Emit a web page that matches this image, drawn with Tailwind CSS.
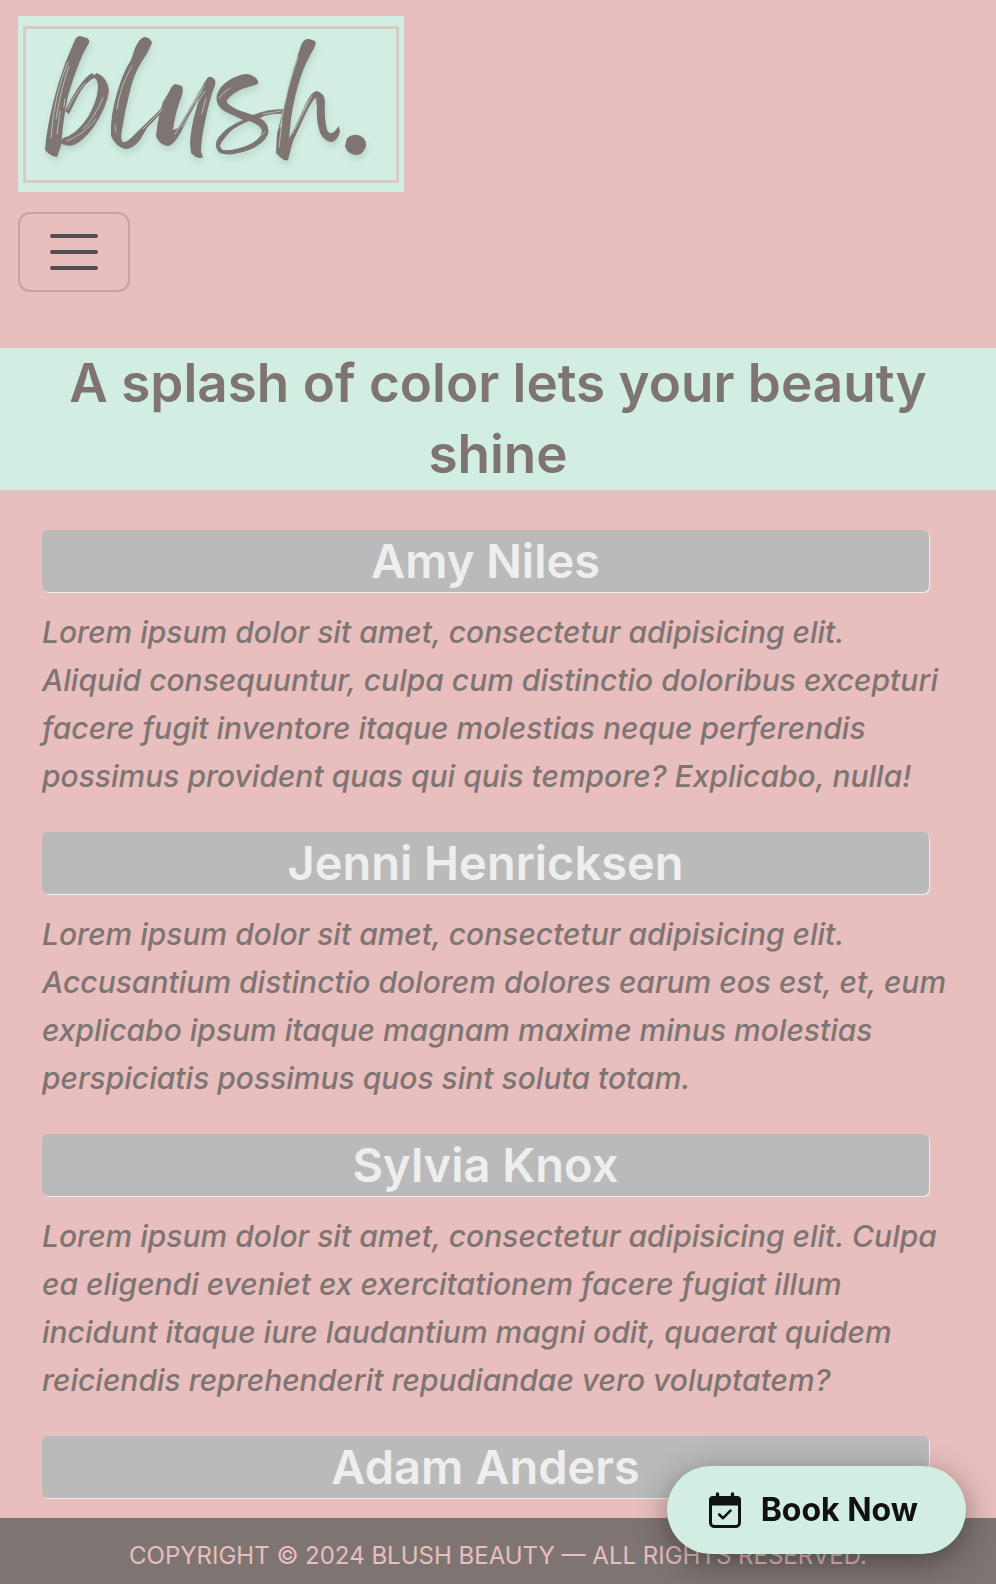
<!DOCTYPE html>
<html lang="en">
<head>
<meta charset="utf-8">
<meta name="viewport" content="width=device-width, initial-scale=1">
<title>Blush Beauty</title>
<script src="https://cdn.jsdelivr.net/npm/@tailwindcss/browser@4"></script>
</head>
<body class="flex min-h-screen flex-col bg-[#e8bebe] font-['Inter',sans-serif] text-[#7e7572]">
<header class="flex shrink-0 flex-col items-start gap-5 px-[18px] pt-4 pb-14">
  <a href="#" aria-label="Blush home" class="block">
    <svg width="386" height="176" viewBox="18 16 386 176" class="block" aria-hidden="true">
      <rect x="18" y="16" width="386" height="176" fill="#d2eee3"/>
      <rect x="24.5" y="27.5" width="373" height="154" fill="none" stroke="#dcc5c0" stroke-width="2.5"/>
      <g fill="#7e7572" class="drop-shadow-[1px_4px_3px_rgba(80,110,100,0.2)]">
        <path d="M74 42Q76 36 80 36L87 38Q90 40 89 43Q84 51 80 61Q73 78 68 96Q65 110 63 126L61 146L57 157Q50 156 45 150L46 140Q48 124 53 103Q58 82 66 61Z"/>
        <path d="M65 111Q78 84 89 75L92 73L94 75L97 73Q108 78 109 91Q107 107 93 128Q83 141 74 145Q67 147 59 143L63 138Q76 135 88 117Q97 101 98 88Q98 79 94 78Q87 81 79 94Q74 104 69 114Z"/>
        <path d="M135 48Q140 37 145 37Q151 38 152 43Q148 53 141 63Q134 74 130 91Q125 110 122 130Q120 140 123 142Q127 143 136 133L165 105L166 108L147 128L140 140Q133 149 125 149Q116 147 111 136Q110 116 117 93Q123 72 131 60Z"/>
        <path d="M169 92Q172 85 175 84L182 86Q184 90 181 98Q175 114 173 130L178 128L206 80Q208 76 211 77Q217 79 215 85Q209 101 205 122Q201 140 201 152L203 157Q198 160 191 153L190 143Q191 126 196 110L199 98L181 132Q174 145 168 146Q159 145 156 136Q158 116 163 102Z"/>
        <path fill-rule="evenodd" d="M217 102Q215 95 221 87Q228 79 238 76Q247 72 253 76Q259 79 258 84Q252 86 242 89Q233 93 227 100Q225 104 238 110L253 115Q266 109 285 109V114Q270 113 260 118Q270 124 268 134Q264 144 249 150Q230 157 220 153Q213 147 218 138Q227 126 243 120L228 113Q219 109 217 102ZM249 121Q232 127 224 139Q217 147 223 150Q233 151 246 146Q261 140 262 131Q261 125 249 121Z"/>
        <path d="M301 45Q304 38 309 39L315 41Q317 43 313 50Q305 64 301 76Q294 97 291 119L289 139L306 103Q312 91 317 91Q324 93 325 101Q324 118 327 130Q329 135 334 132L339 126L340 132Q337 141 332 142Q325 142 320 133Q316 121 317 108L316 98Q313 99 306 113L293 141L288 160Q284 162 276 153L277 134L285 102Q290 78 297 58Z"/>
        <path d="M347 138Q352 134 358 135Q367 138 366 146Q363 155 356 155Q347 154 345 146Z"/>
      </g>
      <g fill="none" stroke="#d2eee3" stroke-linecap="round" stroke-width="0.6">
        <path d="M68 62Q54 94 51 138M69 66Q61 88 56 119M60 111L57 134M65 99L64 107M85 83Q73 96 68 109M96 119Q83 135 67 141M103 98Q94 119 83 129"/>
        <path d="M132 66Q120 86 117 109M115 125L116 132M163 109L143 129M159 110L148 120"/>
        <path d="M204 86L179 125M205 91L182 127M202 91L175 134M206 98L202 113"/>
        <path d="M219 98Q223 92 230 88M220 146L249 143M265 132Q259 139 246 144M281 111L263 114"/>
        <path d="M298 57Q286 91 280 128M282 121L279 147M312 96Q302 109 292 134M309 101L295 129"/>
      </g>
    </svg>
  </a>
  <button type="button" aria-label="Toggle navigation" class="flex h-20 w-28 items-center justify-center rounded-xl border-2 border-[#c8a1a1]">
    <svg width="60" height="60" viewBox="0 0 30 30" fill="none" stroke="#514e50" stroke-width="2" stroke-linecap="round" stroke-miterlimit="10" aria-hidden="true"><path d="M4 7h22M4 15h22M4 23h22"/></svg>
  </button>
</header>
<h1 class="shrink-0 bg-[#d2eee3] px-12 text-center text-[53px]/[71px] font-semibold">A splash of color lets your beauty shine</h1>
<main class="flex flex-1 flex-col gap-8 pt-10 pr-8 pb-5 pl-[42px]">
  <section class="flex shrink-0 flex-col gap-4">
    <h2 class="mr-[35px] rounded-md bg-[#bababa] text-center text-[47px]/[62px] font-semibold text-[#eee] shadow-[1px_1px_0_#eee]">Amy Niles</h2>
    <p class="text-[30px]/[48px] font-medium italic">Lorem ipsum dolor sit amet, consectetur adipisicing elit.<br>Aliquid consequuntur, culpa cum distinctio doloribus excepturi<br>facere fugit inventore itaque molestias neque perferendis<br>possimus provident quas qui quis tempore? Explicabo, nulla!</p>
  </section>
  <section class="flex shrink-0 flex-col gap-4">
    <h2 class="mr-[35px] rounded-md bg-[#bababa] text-center text-[47px]/[62px] font-semibold text-[#eee] shadow-[1px_1px_0_#eee]">Jenni Henricksen</h2>
    <p class="text-[30px]/[48px] font-medium italic">Lorem ipsum dolor sit amet, consectetur adipisicing elit.<br>Accusantium distinctio dolorem dolores earum eos est, et, eum<br>explicabo ipsum itaque magnam maxime minus molestias<br>perspiciatis possimus quos sint soluta totam.</p>
  </section>
  <section class="flex shrink-0 flex-col gap-4">
    <h2 class="mr-[35px] rounded-md bg-[#bababa] text-center text-[47px]/[62px] font-semibold text-[#eee] shadow-[1px_1px_0_#eee]">Sylvia Knox</h2>
    <p class="text-[30px]/[48px] font-medium italic">Lorem ipsum dolor sit amet, consectetur adipisicing elit. Culpa<br>ea eligendi eveniet ex exercitationem facere fugiat illum<br>incidunt itaque iure laudantium magni odit, quaerat quidem<br>reiciendis reprehenderit repudiandae vero voluptatem?</p>
  </section>
  <section class="flex shrink-0 flex-col gap-4">
    <h2 class="mr-[35px] rounded-md bg-[#bababa] text-center text-[47px]/[62px] font-semibold text-[#eee] shadow-[1px_1px_0_#eee]">Adam Anders</h2>
  </section>
</main>
<footer class="shrink-0 bg-[#7e7572] pt-5 pb-2.5 text-center text-[24px]/[36px] text-[#e8bebe]">COPYRIGHT © 2024 BLUSH BEAUTY — ALL RIGHTS RESERVED.</footer>
<button type="button" class="fixed right-[30px] bottom-[30px] flex h-[88px] items-center gap-5 rounded-full bg-[#d2eee3] pr-12 pl-[42px] text-[32px]/[48px] font-bold text-[#111] shadow-[0_8px_32px_rgba(0,0,0,0.4)]">
  <svg width="32" height="36" viewBox="0 0 32 36" aria-hidden="true">
    <rect x="1.5" y="5.5" width="29" height="29" rx="4" fill="none" stroke="#111" stroke-width="3"/>
    <path d="M0 13.5V8Q0 4 4 4H28Q32 4 32 8V13.5Z" fill="#111"/>
    <path d="M8.5 2V6M23.5 2V6" stroke="#111" stroke-width="3.4" stroke-linecap="round"/>
    <path d="M10.2 22.5L14 26.2L21.5 18.7" fill="none" stroke="#111" stroke-width="2.6" stroke-linecap="round" stroke-linejoin="round"/>
  </svg>
  Book Now
</button>
</body>
</html>
